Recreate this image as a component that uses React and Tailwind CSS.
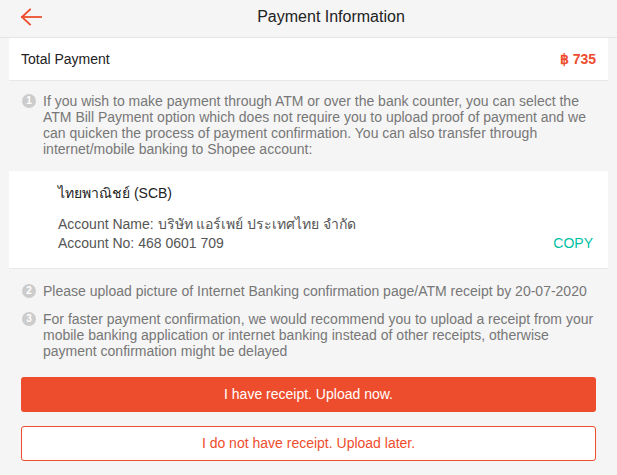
import React from 'react';

const Step = ({ n, children, className = '' }) => (
  <div className={`flex px-[22px] ${className}`}>
    <span className="mt-[1px] mr-[7px] flex h-[14px] w-[14px] shrink-0 items-center justify-center rounded-full bg-[#cccccc] text-[10px] font-bold leading-none text-white">
      {n}
    </span>
    <p className="text-[14px] leading-4 text-[#777777]">{children}</p>
  </div>
);

const App = () => {
  return (
    <div className="min-h-[475px] bg-[#f5f5f5] font-['Liberation_Sans',Arial,'Noto_Sans',sans-serif]">
      {/* Header */}
      <div className="flex h-[38px] items-center border-b border-[#e4e4e4] pb-[4px]">
        <div className="flex h-full w-[45px] items-center pl-[20px]">
          <svg width="22" height="18" viewBox="0 0 22 18" fill="none" stroke="#ee4d2d" strokeWidth="1.8" strokeLinecap="square">
            <path d="M2 9h19" />
            <path d="M10 1.5L2 9l8 7.5" />
          </svg>
        </div>
        <h1 className="flex-1 text-center text-[16px] text-[#222222]">Payment Information</h1>
      </div>

      {/* Total */}
      <div className="mx-[9px] flex h-[43px] items-center justify-between border-b border-[#e8e8e8] bg-white px-[12px]">
        <span className="text-[14px] text-[#222222]">Total Payment</span>
        <span className="text-[14px] font-bold text-[#ee4d2d]">฿ 735</span>
      </div>

      <Step n="1" className="pt-[12px]">
        If you wish to make payment through ATM or over the bank counter, you can select the ATM Bill Payment option
        which does not require you to upload proof of payment and we can quicken the process of payment confirmation.
        You can also transfer through internet/mobile banking to Shopee account:
      </Step>

      {/* Bank card */}
      <div className="mx-[9px] mt-[14px] border-b border-[#e8e8e8] bg-white pb-[15px] pl-[49px] pr-[15px] pt-[14px]">
        <p className="text-[14px] leading-4 text-[#222222]">ไทยพาณิชย์ (SCB)</p>
        <div className="mt-[14px] flex items-end justify-between text-[14px] leading-[19px] text-[#555555]">
          <div>
            <p>Account Name: บริษัท แอร์เพย์ ประเทศไทย จำกัด</p>
            <p>Account No: 468 0601 709</p>
          </div>
          <span className="text-[#00bfa5]">COPY</span>
        </div>
      </div>

      <Step n="2" className="mt-[14px]">
        Please upload picture of Internet Banking confirmation page/ATM receipt by 20-07-2020
      </Step>
      <Step n="3" className="mt-[12px]">
        For faster payment confirmation, we would recommend you to upload a receipt from your mobile banking
        application or internet banking instead of other receipts, otherwise payment confirmation might be delayed
      </Step>

      {/* Buttons */}
      <div className="flex flex-col gap-[14px] px-[21px] pt-[18px] pb-[15px]">
        <button className="h-[35px] w-full rounded-[3px] bg-[#ee4d2d] text-[14px] text-white">
          I have receipt. Upload now.
        </button>
        <button className="h-[35px] w-full rounded-[3px] border border-[#ee4d2d] bg-white text-[14px] text-[#ee4d2d]">
          I do not have receipt. Upload later.
        </button>
      </div>
    </div>
  );
};

export default App;
